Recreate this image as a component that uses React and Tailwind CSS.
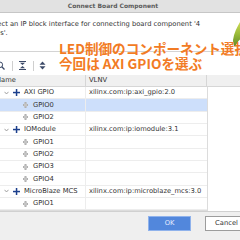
const ROWS = [
  { kind: 'parent', name: 'AXI GPIO', vlnv: 'xilinx.com:ip:axi_gpio:2.0' },
  { kind: 'child', name: 'GPIO0', selected: true },
  { kind: 'child', name: 'GPIO2' },
  { kind: 'parent', name: 'IOModule', vlnv: 'xilinx.com:ip:iomodule:3.1' },
  { kind: 'child', name: 'GPIO1' },
  { kind: 'child', name: 'GPIO2' },
  { kind: 'child', name: 'GPIO3' },
  { kind: 'child', name: 'GPIO4' },
  { kind: 'parent', name: 'MicroBlaze MCS', vlnv: 'xilinx.com:ip:microblaze_mcs:3.0' },
  { kind: 'child', name: 'GPIO1' },
]

function Chevron() {
  return (
    <svg width="5" height="4" viewBox="0 0 5 4" className="shrink-0">
      <path d="M0.5 0.8 L2.5 3 L4.5 0.8" fill="none" stroke="#8a8a8a" strokeWidth="0.8" />
    </svg>
  )
}

function Plus() {
  return (
    <svg width="7" height="7" viewBox="0 0 7 7" className="shrink-0">
      <rect x="2.8" y="0" width="1.5" height="7" fill="#1c3f8c" />
      <rect x="0" y="2.8" width="7" height="1.5" fill="#1c3f8c" />
    </svg>
  )
}

function Port() {
  return (
    <svg width="5" height="6" viewBox="0 0 5 6" className="shrink-0">
      <rect x="1.5" y="0" width="2" height="6" fill="#b0b0b0" />
      <rect x="0" y="2" width="5" height="2" fill="#b0b0b0" />
      <rect x="1" y="1.5" width="3" height="3" fill="#c4c4c4" />
    </svg>
  )
}

function Row({ row }) {
  return (
    <div
      className={`flex h-[12.33px] border-b border-[#ededed] ${row.selected ? 'bg-[#cddffb]' : 'bg-white'}`}
    >
      <div className="w-[93px] flex items-center border-r border-[#ededed]">
        {row.kind === 'parent' ? (
          <>
            <div className="ml-[11px]"><Chevron /></div>
            <div className="ml-[4px] flex"><Plus /></div>
            <span className="ml-[4px]">{row.name}</span>
          </>
        ) : (
          <>
            <div className="ml-[30px] flex"><Port /></div>
            <span className="ml-[5px]">{row.name}</span>
          </>
        )}
      </div>
      <div className="flex-1 flex items-center pl-[3px]">{row.vlnv}</div>
    </div>
  )
}

export default function App() {
  return (
    <div className="relative w-[240px] h-[240px] overflow-hidden bg-[#efefef] text-[#333] font-['DejaVu_Sans',sans-serif] text-[6.75px] leading-none">
      <div className="ml-[-17px] w-[275px] h-[238px] flex flex-col border-b border-[#a0a0a0] bg-white">
        <div className="h-[13px] shrink-0 flex items-center justify-center pr-[15px] bg-[#e2e2e2] border-b border-[#c6c6c6] font-bold text-[6px] text-[#5c5c5c]">
          Connect Board Component
        </div>

        <div className="h-[38px] shrink-0 flex justify-between">
          <div className="pl-[4px] pt-[6.5px] leading-[9px] whitespace-nowrap">
            Select an IP block interface for connecting board component '4
            <br />
            LEDs'.
          </div>
          <svg width="25" height="30" viewBox="0 0 25 30" className="mt-[7px] shrink-0">
            <defs>
              <linearGradient id="leaf" x1="0" y1="0" x2="0" y2="1">
                <stop offset="0" stopColor="#d6df5a" />
                <stop offset="0.5" stopColor="#9cbc3a" />
                <stop offset="1" stopColor="#5e8a28" />
              </linearGradient>
            </defs>
            <path d="M8 0 C5 6 1 12 0 20 C0 24 1 26 2 27 C4 22 8 18 12 16 L12 6 Z" fill="url(#leaf)" />
          </svg>
        </div>

        <div className="h-[24px] shrink-0 flex items-start pt-[9px] border-t border-[#d4d4d4]">
          <svg width="9" height="9" viewBox="0 0 9 9" className="ml-[13px]">
            <circle cx="3.8" cy="3.8" r="2.8" fill="none" stroke="#3c4a68" strokeWidth="1" />
            <path d="M5.8 5.8 L8.5 8.5" stroke="#3c4a68" strokeWidth="1.3" />
          </svg>
          <div className="ml-[7px] w-px h-[10px] bg-[#cfcfcf]" />
          <svg width="7" height="9" viewBox="0 0 7 9" className="ml-[6px]">
            <rect x="0" y="0" width="7" height="1" fill="#3c4a68" />
            <path d="M1 1.8 L6 1.8 L3.5 4 Z" fill="#3c4a68" />
            <path d="M1 7.2 L6 7.2 L3.5 5 Z" fill="#3c4a68" />
            <rect x="0" y="8" width="7" height="1" fill="#3c4a68" />
          </svg>
          <div className="ml-[7px] w-px h-[10px] bg-[#cfcfcf]" />
          <svg width="7" height="9" viewBox="0 0 7 9" className="ml-[5px]">
            <path d="M0.5 3.8 L3.5 0.5 L6.5 3.8 Z" fill="#3c4a68" />
            <path d="M0.5 5.2 L3.5 8.5 L6.5 5.2 Z" fill="#3c4a68" />
          </svg>
        </div>

        <div className="ml-[10px] flex-1 flex flex-col">
          <div className="h-[12px] shrink-0 flex bg-[#f0f0f0] border-b border-[#d6d6d6]">
            <div className="w-[93px] flex items-center pl-[3px] border-r border-[#d6d6d6]">Name</div>
            <div className="w-[121px] flex items-center pl-[3px] border-r border-[#d6d6d6]">VLNV</div>
            <div className="flex-1" />
          </div>
          <div className="w-[215px] border-r border-[#dcdcdc] border-b">
            {ROWS.map((row, i) => (
              <Row key={i} row={row} />
            ))}
          </div>
        </div>

        <div className="h-[28px] shrink-0 flex justify-end items-start pt-[4px] gap-[14px] pr-[10px] bg-[#efefef] border-t border-[#d0d0d0]">
          <button className="w-[43px] h-[15px] flex items-center justify-center bg-[#5287dc] border border-[#8fb2ec] text-[#e4ecff]">
            OK
          </button>
          <button className="w-[43px] h-[15px] flex items-center justify-center bg-white border border-[#9c9c9c] text-[#333]">
            Cancel
          </button>
        </div>
      </div>

      <div className="absolute left-[59px] top-[41px] whitespace-nowrap font-['Noto_Sans_CJK_JP',sans-serif] font-bold text-[13.6px] leading-[15px] text-[#f27b24]">
        LED制御のコンポーネント選択
        <br />
        今回は AXI GPIOを選ぶ
      </div>
    </div>
  )
}
